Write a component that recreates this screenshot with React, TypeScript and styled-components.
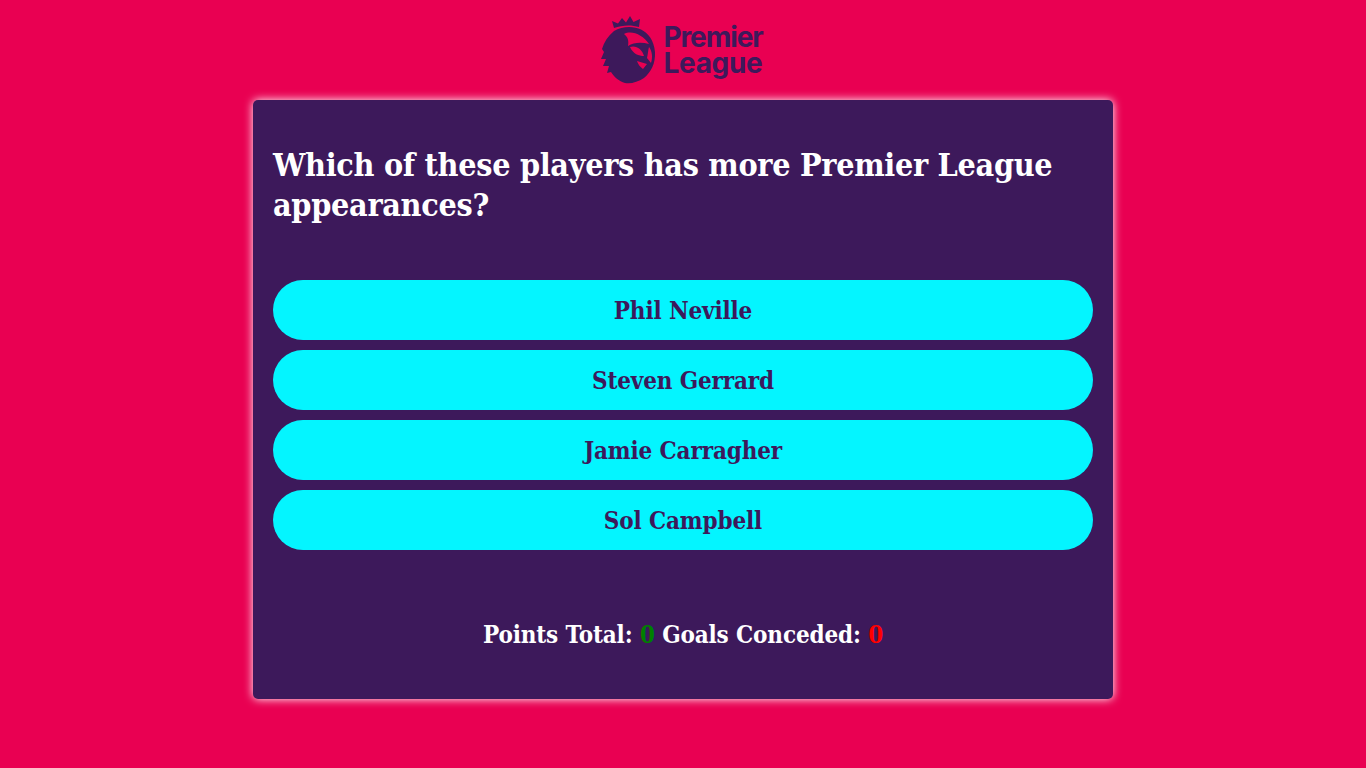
import React from "react";
import styled, { createGlobalStyle } from "styled-components";

const serifStack = `"DejaVu Serif Condensed", "DejaVu Serif", "Liberation Serif", serif`;

const Global = createGlobalStyle`
  html, body { margin: 0; padding: 0; background: #e90052; }
  body { font-family: ${serifStack}; }
`;

const Page = styled.main`
  display: flex;
  flex-direction: column;
  align-items: center;
  min-height: 768px;
`;

const Header = styled.header`
  height: 100px;
  box-sizing: border-box;
  padding-right: 5px;
  display: flex;
  align-items: center;
  justify-content: center;
  gap: 3px;
`;

const Wordmark = styled.div`
  display: flex;
  flex-direction: column;
  font-family: "Inter", "Liberation Sans", sans-serif;
  font-weight: 700;
  font-size: 28px;
  line-height: 26px;
  color: #3d195b;
`;

const WordLine = styled.span<{ $tracking: number }>`
  display: block;
  height: 26px;
  white-space: nowrap;
  letter-spacing: ${(p) => p.$tracking}px;
`;

const Card = styled.section`
  box-sizing: border-box;
  width: 860px;
  height: 599px;
  padding: 45px 20px 0;
  background: #3d195b;
  border-radius: 5px;
  box-shadow: 0 0 10px #fff;
  display: flex;
  flex-direction: column;
`;

const Question = styled.h1`
  margin: 0 0 55px;
  font-size: 32px;
  line-height: 40px;
  font-weight: 700;
  color: #fff;
  letter-spacing: -0.3px;
`;

const Answers = styled.div`
  display: flex;
  flex-direction: column;
  gap: 10px;
`;

const Answer = styled.button`
  height: 60px;
  border: 0;
  padding: 2px 0 0;
  border-radius: 30px;
  background: #04f5ff;
  color: #3d195b;
  font: 700 24px/58px ${serifStack};
  letter-spacing: -0.15px;
`;

const Score = styled.p`
  margin: 69px 0 0;
  text-align: center;
  font-size: 24px;
  line-height: 32px;
  font-weight: 700;
  color: #fff;
  letter-spacing: -0.14px;
`;

const Value = styled.span<{ $tone: string }>`
  color: ${(p) => p.$tone};
`;

const Lion = () => (
  <svg width="62" height="76" viewBox="0 0 62 76" aria-hidden="true">
    <path
      fill="#3d195b"
      d="M16 16 14 9 20 11.500 24 6 28 10.500 32 4 35.500 10 42 7 41 15C33 12.500 24 13 16 16Z"
    />
    <path
      fill="#3d195b"
      fillRule="evenodd"
      d="M16 19C24 14 36 14 43 17.500C50 21 56 28 57 40C57.500 52 53 60 46 66C40 70 33 72 27 71C21 69 16 65 13 60L9 61 11 54 5 54 8 47 3 47 6 40 4 37C6 30 10 24 16 19ZM26 22C34 18 45 23 51 32C44 30 36 30 30 34C31 29 30 25 26 22ZM32 35C38 33 44 37 46 44C41 44 35 42 32 35ZM39 49 49 52 45 57C42 55 40 52 39 49ZM51 35C54 39 55 45 53 51L49 46C50 42 50 38 51 35Z"
    />
  </svg>
);

export default function App() {
  return (
    <Page>
      <Global />
      <Header>
        <Lion />
        <Wordmark>
          <WordLine $tracking={-1.1}>Premier</WordLine>
          <WordLine $tracking={-0.3}>League</WordLine>
        </Wordmark>
      </Header>
      <Card>
        <Question>Which of these players has more Premier League appearances?</Question>
        <Answers>
          <Answer>Phil Neville</Answer>
          <Answer>Steven Gerrard</Answer>
          <Answer>Jamie Carragher</Answer>
          <Answer>Sol Campbell</Answer>
        </Answers>
        <Score>
          Points Total: <Value $tone="#008000">0</Value> Goals Conceded: <Value $tone="#ff0000">0</Value>
        </Score>
      </Card>
    </Page>
  );
}
